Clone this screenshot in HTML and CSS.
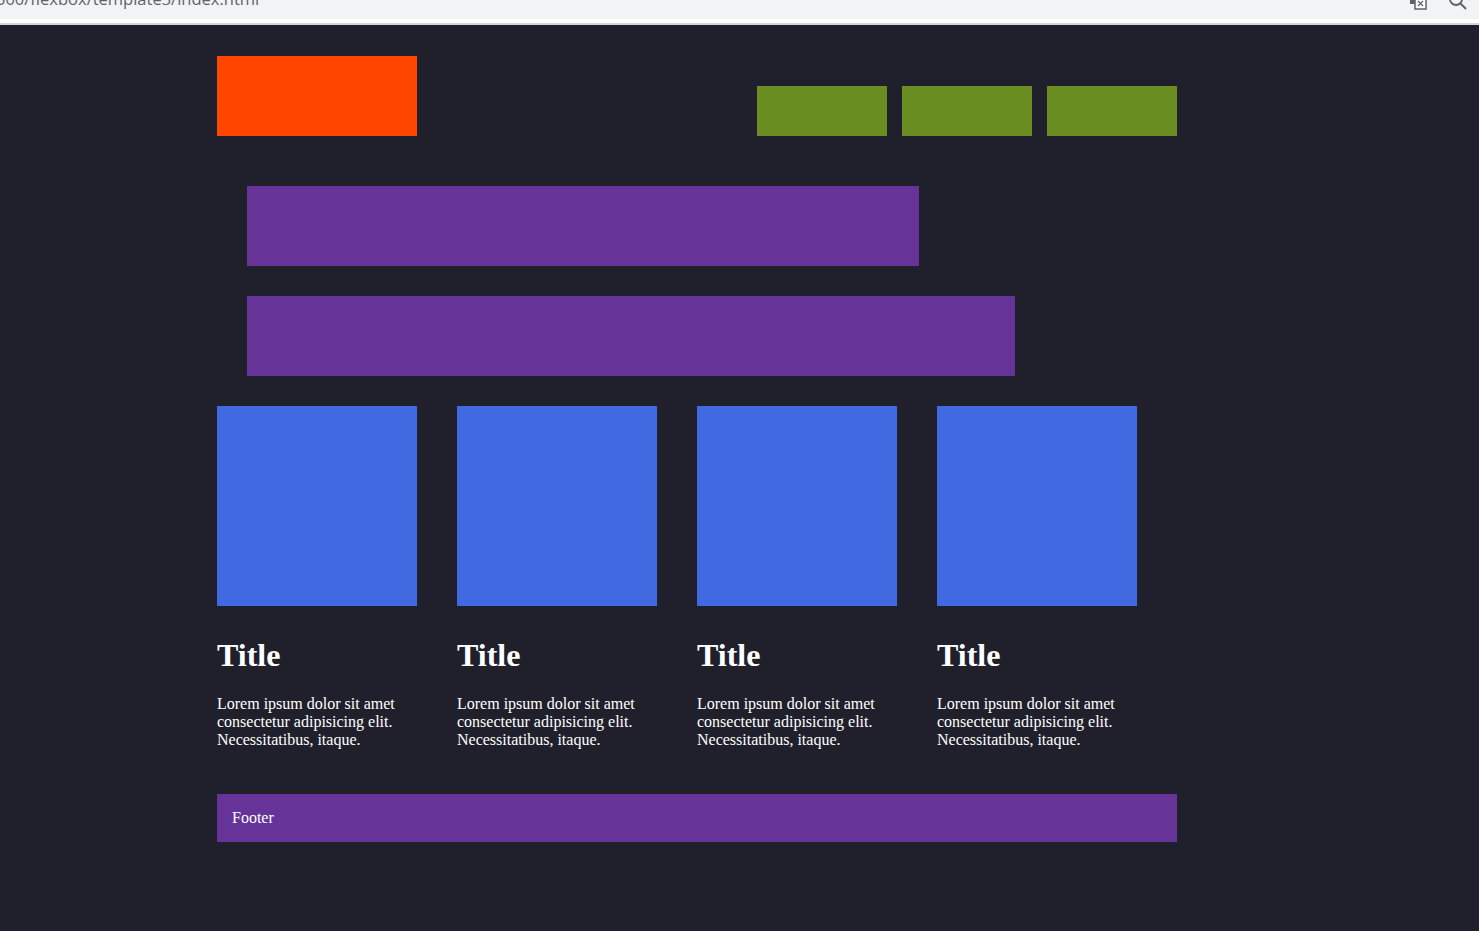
FILE: index.html
```html
<!DOCTYPE html>
<html lang="en">
<head>
<meta charset="utf-8">
<title>Flexbox template 3</title>
<link rel="stylesheet" href="styles.css">
</head>
<body>
<div class="chrome">
  <div class="url">500/flexbox/template3/index.html</div>
  <div class="chrome-icons">
    <svg class="ic" width="20" height="20" viewBox="0 0 20 20"><rect x="2" y="2" width="11" height="11" fill="#5f6368"/><rect x="7" y="7" width="11" height="11" fill="#fff" stroke="#5f6368" stroke-width="1.5"/><path d="M10 15 L15 10 M10 10 L15 15" stroke="#5f6368" stroke-width="1.2"/></svg>
    <svg class="ic" width="20" height="20" viewBox="0 0 20 20"><circle cx="8" cy="8" r="6" fill="none" stroke="#5f6368" stroke-width="1.8"/><path d="M12.5 12.5 L18 18" stroke="#5f6368" stroke-width="2"/></svg>
  </div>
</div>
<div class="line-white"></div>
<div class="line-gray"></div>
<div class="page">
  <div class="container">
    <header class="header">
      <div class="logo"></div>
      <nav class="nav">
        <div class="nav-item"></div>
        <div class="nav-item"></div>
        <div class="nav-item"></div>
      </nav>
    </header>
    <div class="banner banner-1"></div>
    <div class="banner banner-2"></div>
    <section class="cards">
      <article class="card">
        <div class="card-img"></div>
        <h1 class="card-title">Title</h1>
        <p class="card-text">Lorem ipsum dolor sit amet consectetur adipisicing elit. Necessitatibus, itaque.</p>
      </article>
      <article class="card">
        <div class="card-img"></div>
        <h1 class="card-title">Title</h1>
        <p class="card-text">Lorem ipsum dolor sit amet consectetur adipisicing elit. Necessitatibus, itaque.</p>
      </article>
      <article class="card">
        <div class="card-img"></div>
        <h1 class="card-title">Title</h1>
        <p class="card-text">Lorem ipsum dolor sit amet consectetur adipisicing elit. Necessitatibus, itaque.</p>
      </article>
      <article class="card">
        <div class="card-img"></div>
        <h1 class="card-title">Title</h1>
        <p class="card-text">Lorem ipsum dolor sit amet consectetur adipisicing elit. Necessitatibus, itaque.</p>
      </article>
    </section>
    <footer class="footer">Footer</footer>
  </div>
</div>
</body>
</html>
```

FILE: styles.css
```css
html, body {
  margin: 0;
  padding: 0;
}
body {
  background: #20202c;
  font-family: "Liberation Serif", "Times New Roman", serif;
  color: #ffffff;
  min-height: 931px;
}
.chrome {
  height: 19px;
  background: #f1f3f4;
  overflow: hidden;
  display: flex;
  justify-content: space-between;
  align-items: flex-start;
}
.url {
  font-family: "Open Sans", "Noto Sans", sans-serif;
  font-size: 16.5px;
  line-height: 20px;
  color: #5f6368;
  margin-top: -11px;
  margin-left: -4px;
  white-space: nowrap;
}
.chrome-icons {
  display: flex;
  gap: 20px;
  margin-right: 11px;
  margin-top: -9px;
}
.line-white {
  height: 4px;
  background: #ffffff;
}
.line-gray {
  height: 2px;
  background: #d4d5db;
}
.page {
  padding: 31px 0 0 217px;
}
.container {
  width: 960px;
}
.header {
  display: flex;
  justify-content: space-between;
  align-items: flex-end;
}
.logo {
  width: 200px;
  height: 80px;
  background: #ff4500;
}
.nav {
  display: flex;
  gap: 15px;
}
.nav-item {
  width: 130px;
  height: 50px;
  background: #6b8e23;
}
.banner {
  height: 80px;
  margin-left: 30px;
  background: #663399;
}
.banner-1 {
  width: 672px;
  margin-top: 50px;
}
.banner-2 {
  width: 768px;
  margin-top: 30px;
}
.cards {
  display: flex;
  gap: 40px;
  margin-top: 30px;
}
.card {
  width: 200px;
}
.card-img {
  width: 200px;
  height: 200px;
  background: #4169e1;
}
.card-title {
  font-size: 32px;
  font-weight: bold;
  margin: 31px 0 21px;
}
.card-text {
  font-size: 16px;
  margin: 0;
}
.footer {
  margin-top: 45px;
  background: #663399;
  padding: 15px;
  font-size: 16px;
  line-height: 18px;
}
```
